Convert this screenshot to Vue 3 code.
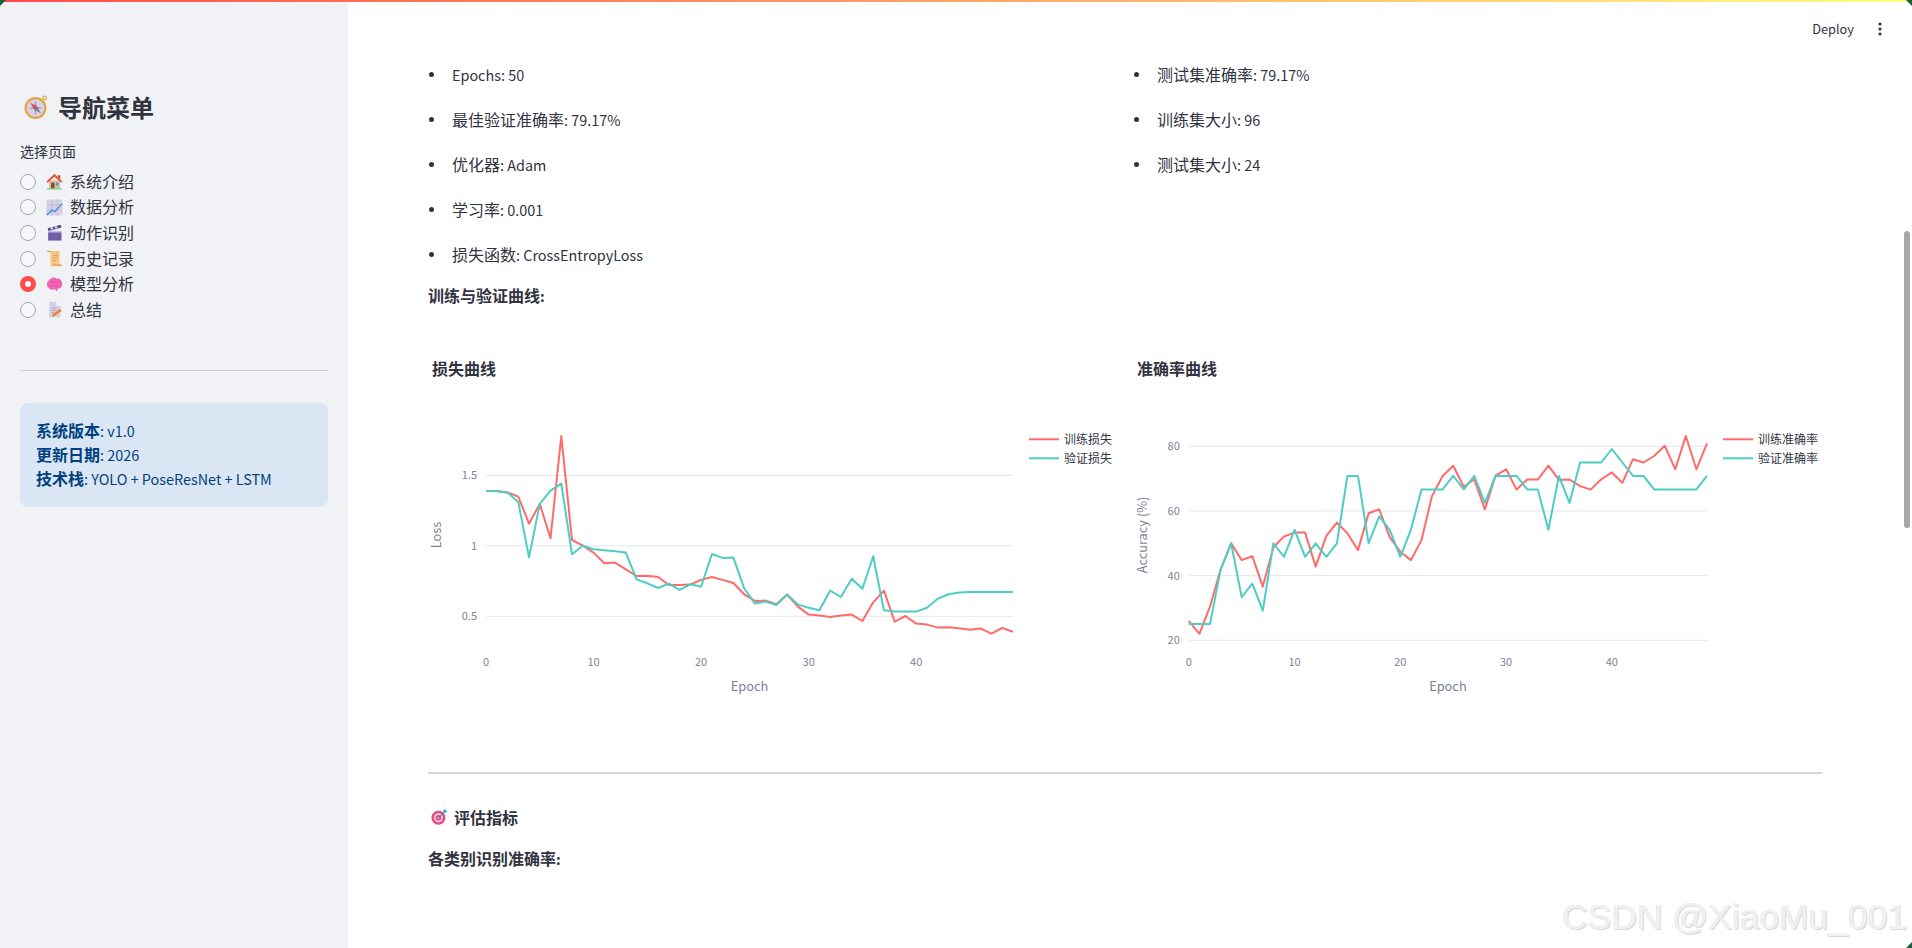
<script setup>
import { ref } from 'vue';

const pages = [
  { key: 'home', label: '系统介绍', icon: 'house' },
  { key: 'data', label: '数据分析', icon: 'trend' },
  { key: 'action', label: '动作识别', icon: 'clapper' },
  { key: 'history', label: '历史记录', icon: 'scroll' },
  { key: 'model', label: '模型分析', icon: 'brain' },
  { key: 'summary', label: '总结', icon: 'memo' },
];
const selected = ref('model');

// 每个图标是一组 path，属性直接绑定到 path 上
const circle = (cx, cy, r) => `M${cx - r} ${cy}a${r} ${r} 0 1 0 ${r * 2} 0a${r} ${r} 0 1 0 ${-r * 2} 0z`;
const icons = {
  compass: [
    { d: circle(11.5, 13, 11), fill: '#e6a445' },
    { d: circle(11.5, 13, 8.8), fill: '#d9d2e4' },
    { d: circle(20.5, 3, 1.8), fill: 'none', stroke: '#e6a445', 'stroke-width': 1.2 },
    { d: 'M11.5 5.5l1.3 6.2 6.2 1.3-6.2 1.3-1.3 6.2-1.3-6.2-6.2-1.3 6.2-1.3z', fill: '#9b98a6' },
    { d: 'M6 7.5l7 4-2.6 2.8z', fill: '#dc3f6a' },
    { d: 'M17 18.5l-7-4.2 2.8-2.8z', fill: '#7b7885' },
  ],
  house: [
    { d: 'M1 14.4h14v1.1H1z', fill: '#5cc97c' },
    { d: 'M3 7h10v7.4H3z', fill: '#e2b98c' },
    { d: 'M11.2 2h2.2v4l-2.2-2z', fill: '#b9513a' },
    { d: 'M8 .8l7.6 7.1-1.3 1.3L8 3.6 1.7 9.2.4 7.9z', fill: '#e3563c' },
    { d: 'M4.8 9h3.2v5.4H4.8z', fill: '#7b5039' },
    { d: 'M9.4 9h2.6v2.6H9.4z', fill: '#2fa8e6' },
  ],
  trend: [
    { d: 'M1.5 .5h13a1 1 0 0 1 1 1v13a1 1 0 0 1-1 1h-13a1 1 0 0 1-1-1v-13a1 1 0 0 1 1-1z', fill: '#d7d1e3' },
    { d: 'M5.5 .5v15M10.5 .5v15M.5 5.5h15M.5 10.5h15', fill: 'none', stroke: '#bdb5cf', 'stroke-width': 0.6 },
    { d: 'M.8 15l5-4.6 2.4 1.6L15.2 4.4', fill: 'none', stroke: '#2f90e2', 'stroke-width': 1.2 },
  ],
  clapper: [
    { d: 'M2 7h12.6v8.6H2z', fill: '#6f5fa8' },
    { d: 'M2 6.4h12.6V8H2z', fill: '#c9bcea' },
    { d: 'M1.6 3.9L13.9.8l.7 2.6L2.2 6.5z', fill: '#5b4b92' },
    { d: 'M4 3.3l1.9-.5 1 2-1.9.5zM8 2.3l1.9-.5 1 2-1.9.5z', fill: '#e4ddf4' },
  ],
  scroll: [
    { d: 'M3.2 1h9.6v12.4h2c0 1.3-.6 2-1.6 2H6c-1.2 0-1.8-.7-1.8-1.8V2.6C4.2 1.8 3.8 1.2 3.2 1z', fill: '#f8c684' },
    { d: 'M.8 .6h3c.7 0 1 .6 1 1.4H2.6C1.8 2 1 1.5.8.6z', fill: '#e59a56' },
    { d: 'M6.5 5h4.5M6.5 7.5h4.5M6.5 10h3', fill: 'none', stroke: '#df9a55', 'stroke-width': 0.9 },
    { d: 'M6 13.6h8.5v1.3H7z', fill: '#e59a56' },
  ],
  brain: [
    { d: 'M4 3C5.5 1 8.5 1 10 2.5 12.5 2 15 4 15.2 7 15.8 9.6 13.6 12 11 11.8 11 13 10.5 14.6 9.6 14L8.6 12.5C6 13.5 2.8 12.5 2 10.6.4 9 .4 5 4 3z', fill: '#ef65b4' },
    { d: 'M4 6c1-1.2 2.6-1 3.4 0M7.6 3.6c1 .6 1.4 1.8.8 3M10 5.4c1.4-.4 2.6.2 3 1.4M3.6 9c1.2.8 2.4.6 3.4-.2M8.4 9c1 1 2.6 1 3.6 0', fill: 'none', stroke: '#d14a9b', 'stroke-width': 0.7 },
  ],
  memo: [
    { d: 'M3 .8h6.6l4 4v10.4H3z', fill: '#d8cfe4' },
    { d: 'M9.6 .8l4 4h-4z', fill: '#f0ebf6' },
    { d: 'M5 6.5h5M5 8.7h4M5 10.9h2', fill: 'none', stroke: '#a99abc', 'stroke-width': 0.8 },
    { d: 'M5.4 15l.8-2.8 7-5 1.6 2.2-7 5z', fill: '#f0873c' },
  ],
  target: [
    { d: circle(7, 9.2, 6.6), fill: '#e44a7b' },
    { d: circle(7, 9.2, 4.4), fill: '#f7c2d2' },
    { d: circle(7, 9.2, 2.6), fill: '#e44a7b' },
    { d: circle(7, 9.2, 1), fill: '#f7c2d2' },
    { d: 'M7 9.2L13 3.2', fill: 'none', stroke: '#3b8fd6', 'stroke-width': 1 },
    { d: 'M11.6 2.2l1.6-1.6.5 1.8 1.9.4-1.7 1.7-2-.3z', fill: '#3fa4ec' },
  ],
};

const params = [
  ['Epochs: 50', '最佳验证准确率: 79.17%', '优化器: Adam', '学习率: 0.001', '损失函数: CrossEntropyLoss'],
  ['测试集准确率: 79.17%', '训练集大小: 96', '测试集大小: 24'],
];

// 西文字形比中文小一号，把一行拆成中文段和西文段分别渲染
const segments = (text) =>
  text.split(/([\u4e00-\u9fff]+)/).filter(Boolean).map((t) => ({ t, latin: !/[\u4e00-\u9fff]/.test(t) }));

const trainLoss = [1.389, 1.389, 1.379, 1.349, 1.157, 1.297, 1.053, 1.779, 1.041, 1.001, 0.952, 0.876, 0.881, 0.833, 0.786, 0.788, 0.779, 0.722, 0.722, 0.725, 0.758, 0.779, 0.758, 0.736, 0.656, 0.609, 0.611, 0.585, 0.654, 0.569, 0.512, 0.505, 0.495, 0.505, 0.512, 0.467, 0.599, 0.682, 0.462, 0.502, 0.448, 0.441, 0.42, 0.422, 0.415, 0.405, 0.413, 0.377, 0.417, 0.391];
const valLoss = [1.389, 1.387, 1.377, 1.311, 0.918, 1.297, 1.391, 1.441, 0.94, 1.0, 0.975, 0.968, 0.961, 0.952, 0.762, 0.734, 0.701, 0.732, 0.687, 0.727, 0.71, 0.942, 0.914, 0.916, 0.699, 0.59, 0.604, 0.58, 0.654, 0.583, 0.561, 0.543, 0.682, 0.637, 0.767, 0.696, 0.926, 0.543, 0.533, 0.533, 0.533, 0.561, 0.625, 0.656, 0.668, 0.673, 0.673, 0.673, 0.673, 0.673];
const trainAcc = [26, 22, 30.4, 41.8, 50, 44.8, 46, 36.6, 48.8, 52.1, 53.3, 53.3, 42.8, 52.3, 56.4, 53.1, 47.9, 59.3, 60.5, 51.9, 47.4, 44.8, 51, 64.6, 70.8, 74, 67.5, 69.8, 60.5, 70.9, 72.9, 66.6, 69.7, 69.7, 74, 69.6, 69.7, 67.7, 66.6, 69.8, 71.9, 68.7, 76, 75, 77, 80.2, 72.9, 83.2, 72.9, 80.9];
const valAcc = [25, 25, 25, 41.67, 50, 33.33, 37.5, 29.17, 50, 45.83, 54.17, 45.83, 50, 45.83, 50, 70.83, 70.83, 50, 58.33, 54.17, 45.83, 54.17, 66.67, 66.67, 66.67, 70.83, 66.67, 70.83, 62.5, 70.83, 70.83, 70.83, 66.67, 66.67, 54.17, 70.83, 62.5, 75, 75, 75, 79.17, 75, 70.83, 70.83, 66.67, 66.67, 66.67, 66.67, 66.67, 70.83];

const makeChart = (cfg) => {
  const xs = (e) => cfg.x0 + (e * (cfg.x1 - cfg.x0)) / 49;
  const ys = (v) => cfg.yRef + (cfg.vRef - v) * cfg.yScale;
  const line = (arr) => arr.map((v, i) => `${xs(i).toFixed(1)},${ys(v).toFixed(1)}`).join(' ');
  return {
    ...cfg,
    xs,
    ys,
    xTicks: [0, 10, 20, 30, 40],
    legendX: cfg.x1 + 16,
    series: cfg.series.map((s) => ({ ...s, points: line(s.data) })),
  };
};

const charts = [
  makeChart({
    title: '损失曲线', yLabel: 'Loss', yLabelX: 9, x0: 58, x1: 585, vRef: 1.5, yRef: 135.3, yScale: 141,
    yTicks: [{ v: 1.5, t: '1.5' }, { v: 1, t: '1' }, { v: 0.5, t: '0.5' }],
    series: [
      { name: '训练损失', color: '#ff6b6b', data: trainLoss },
      { name: '验证损失', color: '#4ecdc4', data: valLoss },
    ],
  }),
  makeChart({
    title: '准确率曲线', yLabel: 'Accuracy (%)', yLabelX: 10, x0: 55.8, x1: 574, vRef: 80, yRef: 106.3, yScale: 3.233,
    yTicks: [{ v: 80, t: '80' }, { v: 60, t: '60' }, { v: 40, t: '40' }, { v: 20, t: '20' }],
    series: [
      { name: '训练准确率', color: '#ff6b6b', data: trainAcc },
      { name: '验证准确率', color: '#4ecdc4', data: valAcc },
    ],
  }),
];
</script>

<template>
  <div class="app">
    <div class="top-line"></div>
    <div class="corner top-left"></div>
    <div class="corner top-right"></div>
    <div class="corner bottom-right"></div>

    <aside class="sidebar">
      <h2 class="side-title">
        <svg class="ico-lg" viewBox="0 0 24 24"><path v-for="(p, i) in icons.compass" :key="i" v-bind="p" /></svg>
        <span>导航菜单</span>
      </h2>
      <div class="radio-label">选择页面</div>
      <div class="radio-group">
        <div
          v-for="page in pages"
          :key="page.key"
          class="radio-row"
          @click="selected = page.key"
        >
          <span class="radio" :class="{ on: selected === page.key }"></span>
          <svg class="ico" viewBox="0 0 16 16"><path v-for="(p, i) in icons[page.icon]" :key="i" v-bind="p" /></svg>
          <span class="radio-text">{{ page.label }}</span>
        </div>
      </div>
      <hr class="side-hr" />
      <div class="info-box">
        <div class="info-line"><b>系统版本</b><span class="latin">: v1.0</span></div>
        <div class="info-line"><b>更新日期</b><span class="latin">: 2026</span></div>
        <div class="info-line"><b>技术栈</b><span class="latin">: YOLO + PoseResNet + LSTM</span></div>
      </div>
    </aside>

    <main class="main">
      <header class="toolbar">
        <span class="deploy">Deploy</span>
        <svg class="kebab" viewBox="0 0 4 14"><circle cx="2" cy="2" r="1.6" /><circle cx="2" cy="7" r="1.6" /><circle cx="2" cy="12" r="1.6" /></svg>
      </header>

      <div class="columns">
        <ul v-for="(col, c) in params" :key="c" class="param-list">
          <li v-for="item in col" :key="item">
            <span v-for="(s, i) in segments(item)" :key="i" :class="{ latin: s.latin }">{{ s.t }}</span>
          </li>
        </ul>
      </div>

      <p class="bold-line curve-head">训练与验证曲线<span class="latin">:</span></p>

      <div class="columns charts">
        <svg v-for="chart in charts" :key="chart.title" class="chart" viewBox="0 0 689 392">
          <text class="chart-title" x="4" y="35">{{ chart.title }}</text>
          <g v-for="t in chart.yTicks" :key="t.t">
            <line class="grid" :x1="chart.x0" :x2="chart.x1" :y1="chart.ys(t.v)" :y2="chart.ys(t.v)" />
            <text class="tick" :x="chart.x0 - 9" :y="chart.ys(t.v) + 4" text-anchor="end">{{ t.t }}</text>
          </g>
          <text v-for="e in chart.xTicks" :key="e" class="tick" :x="chart.xs(e)" y="326" text-anchor="middle">{{ e }}</text>
          <text class="axis-title" :x="(chart.x0 + chart.x1) / 2" y="351" text-anchor="middle">Epoch</text>
          <text
            class="axis-title"
            text-anchor="middle"
            :transform="`translate(${chart.yLabelX + 4} 195) rotate(-90)`"
          >{{ chart.yLabel }}</text>
          <polyline
            v-for="s in chart.series"
            :key="s.name"
            class="curve"
            :points="s.points"
            :stroke="s.color"
          />
          <g v-for="(s, i) in chart.series" :key="s.name">
            <line :x1="chart.legendX" :x2="chart.legendX + 30" :y1="99.3 + i * 19" :y2="99.3 + i * 19" :stroke="s.color" stroke-width="2" />
            <text class="legend" :x="chart.legendX + 35" :y="103.6 + i * 19">{{ s.name }}</text>
          </g>
        </svg>
      </div>

      <hr class="main-hr" />

      <h3 class="section-head">
        <svg class="ico" viewBox="0 0 16 16"><path v-for="(p, i) in icons.target" :key="i" v-bind="p" /></svg>
        <span>评估指标</span>
      </h3>
      <p class="bold-line">各类别识别准确率<span class="latin">:</span></p>

      <div class="scroll-thumb"></div>
      <div class="watermark">CSDN @XiaoMu_001</div>
    </main>
  </div>
</template>

<style scoped>
.app {
  position: relative;
  display: flex;
  width: 1912px;
  height: 948px;
  overflow: hidden;
  background: #fff;
  color: #31333f;
  font-family: "Noto Sans CJK SC", "Liberation Sans", sans-serif;
  font-size: 16px;
}
.latin {
  font-size: 14.4px;
}
.top-line {
  position: absolute;
  top: 0;
  left: 0;
  right: 0;
  height: 2px;
  background: linear-gradient(90deg, #ff4b4b, #fffd80);
  z-index: 3;
}
/* 截图窗口的圆角露出的深绿色背景 */
.corner {
  position: absolute;
  width: 6px;
  height: 6px;
  background: #17603a;
  z-index: 4;
}
.top-left {
  top: 0;
  left: 0;
  clip-path: polygon(0 0, 100% 0, 0 100%);
}
.top-right {
  top: 0;
  right: 0;
  clip-path: polygon(0 0, 100% 0, 100% 100%);
}
.bottom-right {
  right: 0;
  bottom: 0;
  clip-path: polygon(100% 0, 100% 100%, 0 100%);
}

.sidebar {
  width: 348px;
  flex: none;
  box-sizing: border-box;
  padding: 89px 20px 0;
  background: #f0f2f6;
}
.side-title {
  display: flex;
  align-items: center;
  gap: 10px;
  height: 36px;
  margin: 0;
  padding-left: 4px;
  font-size: 24px;
  font-weight: 600;
  line-height: 36px;
}
.ico-lg {
  width: 24px;
  height: 24px;
}
.radio-label {
  margin-top: 16px;
  margin-bottom: 8px;
  font-size: 14px;
  line-height: 20px;
}
.radio-row {
  display: flex;
  align-items: center;
  height: 25.6px;
  cursor: pointer;
}
.radio-text {
  padding-bottom: 2px;
}
.radio {
  box-sizing: border-box;
  width: 16px;
  height: 16px;
  margin-right: 10px;
  border: 1px solid #a8a9b1;
  border-radius: 50%;
  background: #f6f7fa;
}
.radio.on {
  border: 5px solid #ff4b4b;
  background: #fff;
}
.ico {
  flex: none;
  width: 17px;
  height: 17px;
  margin-right: 7px;
}
.side-hr {
  height: 1px;
  margin: 47px 0 32px;
  border: 0;
  background: #cdced4;
}
.info-box {
  padding: 15px 16px 17px;
  border-radius: 8px;
  background: #dae6f3;
  color: #004280;
}
.info-line {
  height: 24px;
  line-height: 24px;
}
.info-box b {
  font-weight: 600;
}

.main {
  position: relative;
  flex: 1;
  box-sizing: border-box;
  padding: 62px 90px 0 80px;
}
.toolbar {
  position: absolute;
  top: 18px;
  right: 30px;
  display: flex;
  align-items: center;
  height: 22px;
}
.deploy {
  font-size: 12.8px;
  line-height: 22px;
}
.kebab {
  width: 4px;
  height: 14px;
  margin-left: 24px;
  fill: #31333f;
}
.columns {
  display: grid;
  grid-template-columns: 1fr 1fr;
  column-gap: 16px;
}
.param-list {
  margin: 0;
  padding-left: 24px;
  list-style: none;
}
.param-list li {
  position: relative;
  height: 25px;
  margin-bottom: 20px;
  line-height: 25px;
}
.param-list li::before {
  content: "";
  position: absolute;
  top: 10px;
  left: -23px;
  width: 5px;
  height: 5px;
  border-radius: 50%;
  background: #31333f;
}
.bold-line {
  margin: 0;
  font-weight: 600;
  line-height: 25px;
}
.curve-head {
  margin-top: -4px;
}
.charts {
  margin-top: 32px;
}
.chart {
  display: block;
  width: 689px;
  height: 392px;
}
.chart-title {
  font-size: 16px;
  font-weight: 600;
  fill: #31333f;
}
.grid {
  stroke: #e4e6ef;
  stroke-width: 1;
}
.tick {
  font-size: 11px;
  fill: #808495;
}
.axis-title {
  font-size: 12.8px;
  fill: #7d8299;
}
.curve {
  fill: none;
  stroke-width: 2;
  stroke-linejoin: round;
}
.legend {
  font-size: 12px;
  fill: #31333f;
}
.main-hr {
  height: 2px;
  margin: 40px 0 0;
  border: 0;
  background: #d5d6d9;
}
.section-head {
  display: flex;
  align-items: center;
  height: 25px;
  margin: 30px 0 17px;
  padding-left: 3px;
  font-size: 16px;
  font-weight: 600;
}
.section-head .ico {
  margin-right: 6px;
}
.scroll-thumb {
  position: absolute;
  top: 231px;
  right: 2px;
  width: 6px;
  height: 297px;
  border-radius: 3px;
  background: #a8a8a8;
}
.watermark {
  position: absolute;
  right: 5px;
  top: 895px;
  font-family: "Liberation Sans", sans-serif;
  font-size: 35.4px;
  line-height: 44px;
  white-space: nowrap;
  color: #f1f1f1;
  text-shadow: 1px 1px 0 #d8d8d8, -0.5px -0.5px 0 #e2e2e2;
}
</style>
